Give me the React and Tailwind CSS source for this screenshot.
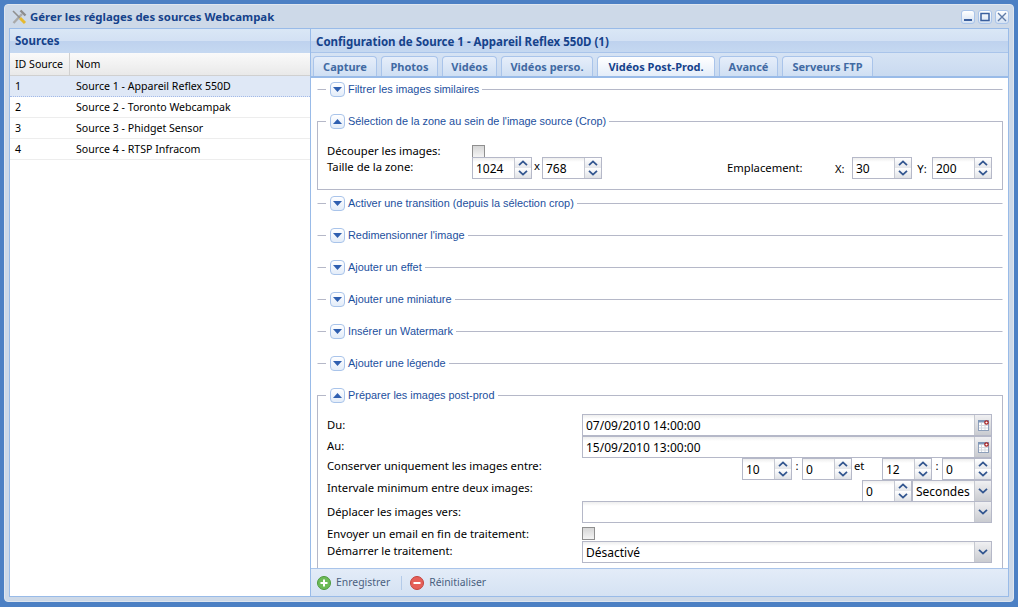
import React from 'react';

const tabs = [
    { label: 'Capture', width: 'w-[64px]' },
    { label: 'Photos', width: 'w-[57px]' },
    { label: 'Vidéos', width: 'w-[55px]' },
    { label: 'Vidéos perso.', width: 'w-[92px]' },
    { label: 'Vidéos Post-Prod.', width: 'w-[118px]' },
    { label: 'Avancé', width: 'w-[59px]' },
    { label: 'Serveurs FTP', width: 'w-[91px]' },
];
const sources = ['Source 1 - Appareil Reflex 550D', 'Source 2 - Toronto Webcampak', 'Source 3 - Phidget Sensor', 'Source 4 - RTSP Infracom'];

const Chevron = ({ up }) => (
    <svg viewBox="0 0 10 6" className="w-[10px] h-[6px]">
        <path d={up ? 'M1 5.2 L5 1.4 L9 5.2' : 'M1 .8 L5 4.6 L9 .8'} fill="none" stroke="#31558f" strokeWidth="1.8" />
    </svg>
);

const Toggle = ({ up }) => (
    <button className="w-[15px] h-[15px] shrink-0 rounded-[4px] border border-[#a9c4ea] bg-gradient-to-b from-white to-[#e3ecf9] flex items-center justify-center">
        <svg viewBox="0 0 9 5" className="w-[9px] h-[5px]">
            <path d={up ? 'M0 5 L4.5 0 L9 5 Z' : 'M0 0 L4.5 5 L9 0 Z'} fill="#2f5fb0" />
        </svg>
    </button>
);

const Legend = ({ up, children }) => (
    <legend className="ml-[8px] flex items-center gap-[3px] pl-[4px] pr-[3px] h-[15px] text-[#1c4f9e] text-[10.9px] leading-[15px]" style={{ fontFamily: '"Liberation Sans", sans-serif' }}>
        <Toggle up={up} />
        <span>{children}</span>
    </legend>
);

const Collapsed = ({ children }) => (
    <fieldset className="border border-b-0 border-x-transparent border-t-[#b5b8c8] h-[32px] shrink-0">
        <Legend>{children}</Legend>
    </fieldset>
);

const Spinner = ({ value, className }) => (
    <div className={`flex h-[22px] border border-[#b5b8c8] bg-white shrink-0 ${className}`}>
        <div className="flex-1 min-w-0 pl-[3px] text-[12px] leading-[22px] bg-gradient-to-b from-[#eeeeee] to-white to-[20%]">{value}</div>
        <div className="w-[17px] flex flex-col border-l border-[#c5c8d2]">
            <div className="h-1/2 flex items-center justify-center bg-gradient-to-b from-white to-[#e4e6ea]"><Chevron up /></div>
            <div className="h-1/2 flex items-center justify-center bg-gradient-to-b from-white to-[#e0e2e6]"><Chevron /></div>
        </div>
    </div>
);

const Calendar = () => (
    <svg viewBox="0 0 13 13" className="w-[13px] h-[13px]">
        <rect x="1.5" y="1.5" width="10" height="10" fill="#fff" stroke="#8d9fba" />
        <rect x="1" y="1" width="11" height="2.5" fill="#7f97b8" />
        <path d="M4.5 4 V11 M8 4 V11 M2 6.5 H11 M2 9 H11" stroke="#d3d8df" strokeWidth="1" />
        <circle cx="9.5" cy="3.5" r="1.7" fill="#fff" stroke="#a81c1c" strokeWidth="1.2" />
    </svg>
);

const Field = ({ value, calendar, combo, className = 'w-[410px]' }) => (
    <div className={`flex h-[22px] border border-[#b5b8c8] shrink-0 ${className}`}>
        <div className="flex-1 min-w-0 pl-[3px] text-[12px] leading-[22px] bg-gradient-to-b from-[#eeeeee] to-white to-[20%] whitespace-nowrap">{value}</div>
        {(calendar || combo) && (
            <div className="w-[17px] flex items-center justify-center border-l border-[#c5c8d0] bg-gradient-to-b from-[#f0f0f2] to-[#c9cbd0]">
                {calendar ? <Calendar /> : <Chevron />}
            </div>
        )}
    </div>
);

const Check = ({ className = '' }) => (
    <div className={`w-[13px] h-[13px] border border-[#8f8f8f] bg-gradient-to-b from-[#d6d6d6] to-[#f4f4f4] ${className}`} />
);

const Row = ({ label, labelOffset = '', className = '', children }) => (
    <div className={`flex justify-between ${className}`}>
        <span className={`text-[11.25px] leading-[14px] ${labelOffset}`}>{label}</span>
        {children}
    </div>
);

export default function App() {
    return (
        <div className="w-[1018px] h-[607px] bg-[#4c80c4] p-[4px] overflow-hidden text-black" style={{ fontFamily: '"Noto Sans", sans-serif' }}>
            <div className="h-[598px] w-[1010px] rounded-[4px] border border-[#dfe6ef] bg-[#cdd9e8] flex flex-col px-[4px] pb-[4px]">
                <div className="h-[23px] shrink-0 flex items-center pl-[2px]">
                    <svg viewBox="0 0 16 16" className="w-[16px] h-[16px]">
                        <path d="M2.5 14 L11 5" stroke="#a9a9a9" strokeWidth="2.4" />
                        <path d="M9.5 1.5 L14.5 6.5" stroke="#8c8c8c" strokeWidth="2.4" />
                        <path d="M2 2 L9 9" stroke="#8f8f8f" strokeWidth="1.6" />
                        <path d="M9 9 L14 14" stroke="#e6b92e" strokeWidth="3" />
                    </svg>
                    <span className="ml-[3px] text-[11.4px] font-bold text-[#15428b] flex-1">Gérer les réglages des sources Webcampak</span>
                    <div className="flex gap-[3px]">
                        {['min', 'max', 'close'].map((k) => (
                            <div key={k} className="w-[14px] h-[14px] rounded-[3px] border border-[#a9c4ea] bg-gradient-to-b from-white to-[#d5e2f3] flex items-center justify-center">
                                <svg viewBox="0 0 10 10" className="w-[10px] h-[10px]">
                                    {k === 'min' && <path d="M1 8 H9" stroke="#3a5f9e" strokeWidth="2" />}
                                    {k === 'max' && <rect x="1" y="1.5" width="8" height="7" fill="none" stroke="#3a5f9e" strokeWidth="1.5" />}
                                    {k === 'close' && <path d="M1 1 L9 9 M9 1 L1 9" stroke="#5f7ba8" strokeWidth="1.4" />}
                                </svg>
                            </div>
                        ))}
                    </div>
                </div>
                <div className="flex flex-1 min-h-0 border border-[#99bbe8]">
                    <div className="w-[301px] shrink-0 flex flex-col bg-white border-r border-[#99bbe8]">
                        <div className="h-[24px] shrink-0 pl-[5px] text-[11.5px] font-bold leading-[24px] text-[#15428b] bg-[linear-gradient(#dae7f6_0%,#d3e1f4_50%,#bed2ee_52%,#c5d8f1_100%)] border-b border-[#c5d8f1]">Sources</div>
                        <div className="h-[23px] shrink-0 flex items-center text-[10.6px] bg-gradient-to-b from-[#fafafa] to-[#e9e9e9] border-b border-[#d0d0d0]">
                            <div className="w-[60px] pl-[5px] h-full leading-[23px] border-r border-[#d0d0d0]">ID Source</div>
                            <div className="pl-[6px] leading-[23px]">Nom</div>
                        </div>
                        {sources.map((s, i) => (
                            <div key={s} className={`h-[21px] shrink-0 flex text-[10.6px] leading-[20px] ${i === 0 ? 'bg-[#dfe8f6] border-b border-dotted border-[#a3bae9]' : 'border-b border-[#ededed]'}`}>
                                <div className="w-[60px] pl-[5px]">{i + 1}</div>
                                <div className="pl-[6px]">{s}</div>
                            </div>
                        ))}
                    </div>
                    <div className="flex-1 min-w-0 flex flex-col bg-white">
                        <div className="h-[24px] shrink-0 pl-[5px] text-[11.5px] font-bold leading-[25px] text-[#15428b] bg-[linear-gradient(#dae7f6_0%,#d3e1f4_50%,#bed2ee_52%,#c5d8f1_100%)] border-b border-[#a9c4ea]">Configuration de Source 1 - Appareil Reflex 550D (1)</div>
                        <div className="h-[25px] shrink-0 flex items-end gap-[4px] pl-[2px] bg-gradient-to-b from-[#d6e3f4] to-[#c9daf0] border-b-2 border-[#99bbe8]">
                            {tabs.map((t, i) => (
                                <div key={t.label} className={`h-[20px] rounded-t-[4px] border border-b-0 border-[#a9c4ea] text-center text-[11px] font-bold leading-[20px] whitespace-nowrap ${t.width} ${i === 4 ? 'bg-gradient-to-b from-white to-[#e4edf9] text-[#15428b]' : 'bg-gradient-to-b from-[#e6eefa] to-[#cfdff3] text-[#416aa3]'}`}>{t.label}</div>
                            ))}
                        </div>
                        <div className="flex-1 min-h-0 overflow-hidden flex flex-col pl-[6px] pr-[5px] pt-[4px]">
                            <Collapsed>Filtrer les images similaires</Collapsed>
                            <fieldset className="border border-[#b5b8c8] h-[76px] shrink-0 mb-[6px]">
                                <Legend up>Sélection de la zone au sein de l'image source (Crop)</Legend>
                                <div className="pl-[9px] pr-[10px] pt-[16px]">
                                    <div className="flex h-[13px]">
                                        <span className="w-[145px] text-[11.25px] leading-[14px] mt-[-1px]">Découper les images:</span>
                                        <Check />
                                    </div>
                                    <div className="flex items-start h-[22px] mt-[-1px]">
                                        <span className="w-[145px] text-[11.25px] leading-[14px] mt-[3px]">Taille de la zone:</span>
                                        <Spinner value="1024" className="w-[60px]" />
                                        <span className="w-[10px] text-center text-[11.25px] leading-[18px]">x</span>
                                        <Spinner value="768" className="w-[60px]" />
                                        <span className="ml-[125px] w-[108px] text-[11.25px] leading-[14px] mt-[4px]">Emplacement:</span>
                                        <span className="w-[17px] text-[11.25px] leading-[14px] mt-[5px]">X:</span>
                                        <Spinner value="30" className="w-[60px]" />
                                        <span className="w-[20px] text-center text-[11.25px] leading-[14px] mt-[5px]">Y:</span>
                                        <Spinner value="200" className="w-[60px]" />
                                    </div>
                                </div>
                            </fieldset>
                            <Collapsed>Activer une transition (depuis la sélection crop)</Collapsed>
                            <Collapsed>Redimensionner l'image</Collapsed>
                            <Collapsed>Ajouter un effet</Collapsed>
                            <Collapsed>Ajouter une miniature</Collapsed>
                            <Collapsed>Insérer un Watermark</Collapsed>
                            <Collapsed>Ajouter une légende</Collapsed>
                            <fieldset className="border border-b-0 border-[#b5b8c8] shrink-0 h-[200px]">
                                <Legend up>Préparer les images post-prod</Legend>
                                <div className="flex flex-col pl-[9px] pr-[10px] pt-[11px]">
                                    <Row label="Du:" labelOffset="mt-[4px]"><Field value="07/09/2010 14:00:00" calendar /></Row>
                                    <Row label="Au:" labelOffset="mt-[3px]"><Field value="15/09/2010 13:00:00" calendar /></Row>
                                    <Row label="Conserver uniquement les images entre:" labelOffset="mt-[1px]">
                                        <div className="flex h-[22px]">
                                            <Spinner value="10" className="w-[50px]" />
                                            <span className="w-[10px] text-center text-[11.25px]">:</span>
                                            <Spinner value="0" className="w-[50px]" />
                                            <span className="w-[30px] pl-[2px] text-[11.25px] leading-[16px]">et</span>
                                            <Spinner value="12" className="w-[50px]" />
                                            <span className="w-[10px] text-center text-[11.25px]">:</span>
                                            <Spinner value="0" className="w-[50px]" />
                                        </div>
                                    </Row>
                                    <Row label="Intervale minimum entre deux images:" labelOffset="mt-[1px]" className="mb-[-1px]">
                                        <div className="flex h-[22px]">
                                            <Spinner value="0" className="w-[50px]" />
                                            <Field value="Secondes" combo className="w-[80px]" />
                                        </div>
                                    </Row>
                                    <Row label="Déplacer les images vers:" labelOffset="mt-[4px]"><Field combo /></Row>
                                    <div className="flex h-[18px] pt-[4px]">
                                        <span className="w-[255px] text-[11.25px] leading-[14px]">Envoyer un email en fin de traitement:</span>
                                        <Check />
                                    </div>
                                    <Row label="Démarrer le traitement:" labelOffset="mt-[3px]"><Field value="Désactivé" combo /></Row>
                                </div>
                            </fieldset>
                        </div>
                        <div className="h-[28px] shrink-0 flex items-center pl-[6px] text-[10.4px] text-[#4a5f7f] bg-gradient-to-b from-[#e3ecf8] to-[#d5e2f3] border-t border-[#a9c4ea]">
                            <svg viewBox="0 0 14 14" className="w-[14px] h-[14px]">
                                <circle cx="7" cy="7" r="6.5" fill="#6dbb58" stroke="#4d9a3c" />
                                <path d="M3.5 7 H10.5 M7 3.5 V10.5" stroke="#fff" strokeWidth="2" />
                            </svg>
                            <span className="ml-[5px]">Enregistrer</span>
                            <span className="ml-[11px] mr-[8px] w-px h-[14px] bg-[#b4cbe9]" />
                            <svg viewBox="0 0 14 14" className="w-[14px] h-[14px]">
                                <circle cx="7" cy="7" r="6.5" fill="#e5605a" stroke="#c4433d" />
                                <path d="M3.5 7 H10.5" stroke="#fff" strokeWidth="2" />
                            </svg>
                            <span className="ml-[5px]">Réinitialiser</span>
                        </div>
                    </div>
                </div>
            </div>
        </div>
    );
}
